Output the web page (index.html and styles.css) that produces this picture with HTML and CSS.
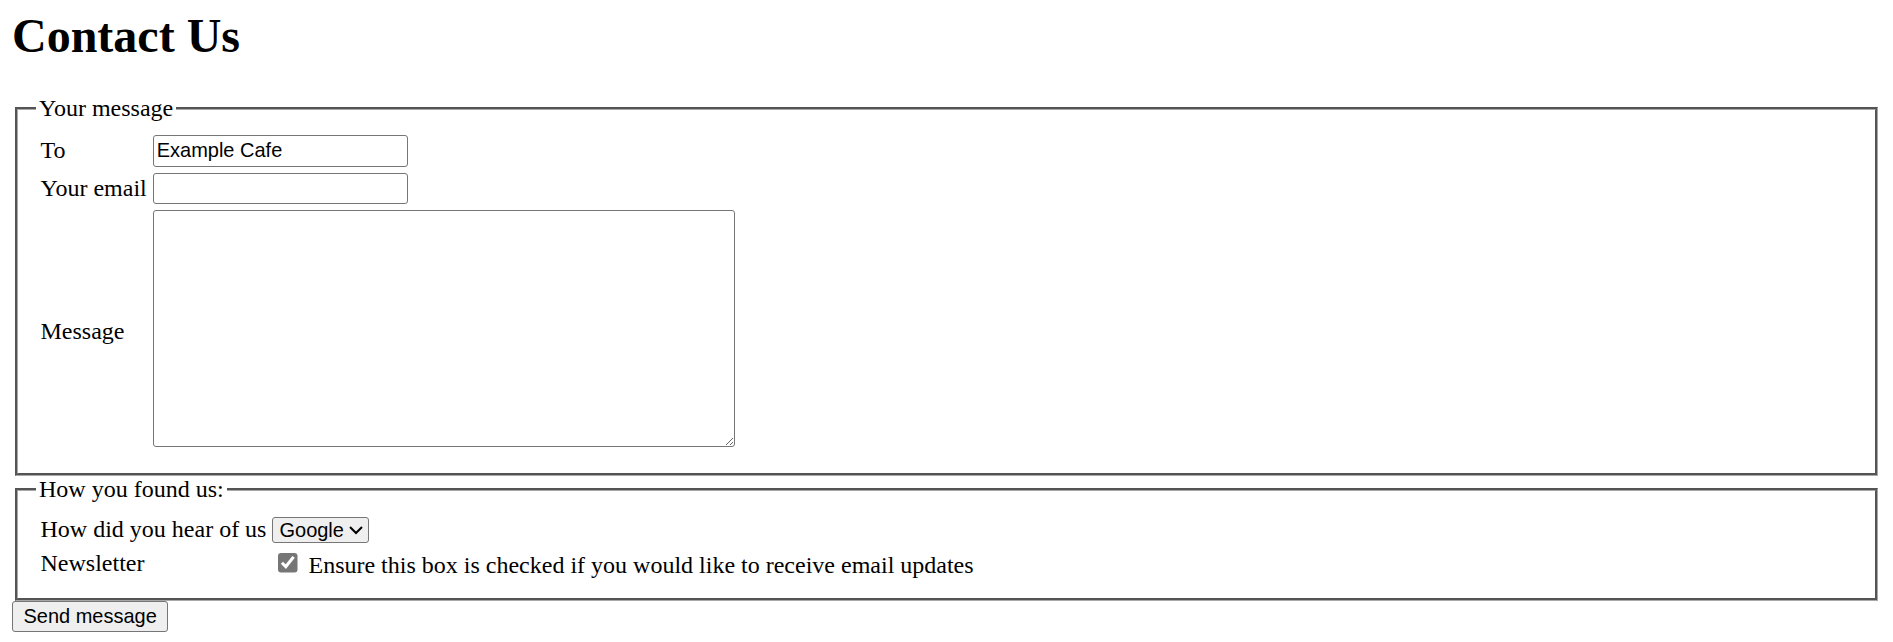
FILE: index.html
```html
<!DOCTYPE html>
<html lang="en">
<head>
<meta charset="utf-8">
<title>Contact Us</title>
<link rel="stylesheet" href="styles.css">
</head>
<body>
<h1 class="page-title">Contact Us</h1>
<form class="contact-form">
  <fieldset class="group">
    <legend class="group-legend">Your message</legend>
    <table class="form-table">
      <tr>
        <td class="label-cell"><label for="to">To</label></td>
        <td><input class="text-input" type="text" id="to" value="Example Cafe"></td>
      </tr>
      <tr>
        <td class="label-cell"><label for="email">Your email</label></td>
        <td><input class="text-input" type="email" id="email"></td>
      </tr>
      <tr>
        <td class="label-cell"><label for="msg">Message</label></td>
        <td><textarea class="message-input" id="msg"></textarea></td>
      </tr>
    </table>
  </fieldset>
  <fieldset class="group">
    <legend class="group-legend">How you found us:</legend>
    <table class="form-table">
      <tr>
        <td class="label-cell"><label for="hear">How did you hear of us</label></td>
        <td>
          <select class="select-input" id="hear">
            <option>Google</option>
            <option>Friend</option>
            <option>Advert</option>
          </select>
        </td>
      </tr>
      <tr>
        <td class="label-cell">Newsletter</td>
        <td><input class="check-input" type="checkbox" id="news" checked> <label for="news">Ensure this box is checked if you would like to receive email updates</label></td>
      </tr>
    </table>
  </fieldset>
  <button class="send-button" type="submit">Send message</button>
</form>
</body>
</html>
```

FILE: styles.css
```css
html {
  zoom: 1.5;
}

body {
  margin: 8px;
  font-family: "Liberation Serif", "Times New Roman", serif;
  font-size: 16px;
  color: #000;
  background: #fff;
}

.page-title {
  font-size: 32px;
  font-weight: bold;
  line-height: 32px;
  margin: 0 0 23.5px;
}

.contact-form {
  margin: 0;
}

.group {
  margin: 0 2px;
  padding: 0.35em 0.75em 0.625em;
  border: 2px groove #a8a8a8;
}

.group-legend {
  padding: 0 2px;
}

.form-table {
  border-spacing: 2px;
}

.form-table td {
  padding: 1px;
  vertical-align: middle;
}

.text-input {
  box-sizing: border-box;
  width: 170px;
  height: 21px;
  padding: 1px 2px;
  border: 1px solid #767676;
  border-radius: 2px;
  font-family: "Liberation Sans", Arial, sans-serif;
  font-size: 13.333px;
  margin: 0;
}

.message-input {
  box-sizing: border-box;
  width: 388px;
  height: 158px;
  padding: 2px;
  border: 1px solid #767676;
  border-radius: 2px;
  margin: 0;
  font-family: "Liberation Mono", monospace;
  font-size: 13.333px;
}

.select-input {
  font-family: "Liberation Sans", Arial, sans-serif;
  font-size: 13.333px;
  border: 1px solid #767676;
  border-radius: 2px;
  margin: 0;
}

.check-input {
  accent-color: #767676;
  margin: 3px 3px 3px 4px;
}

.send-button {
  box-sizing: border-box;
  height: 20.67px;
  font-family: "Liberation Sans", Arial, sans-serif;
  font-size: 13.333px;
  margin: 0;
  padding: 0 7px;
  border: 1px solid #767676;
  border-radius: 2px;
  background: #efefef;
  color: #000;
}
```
